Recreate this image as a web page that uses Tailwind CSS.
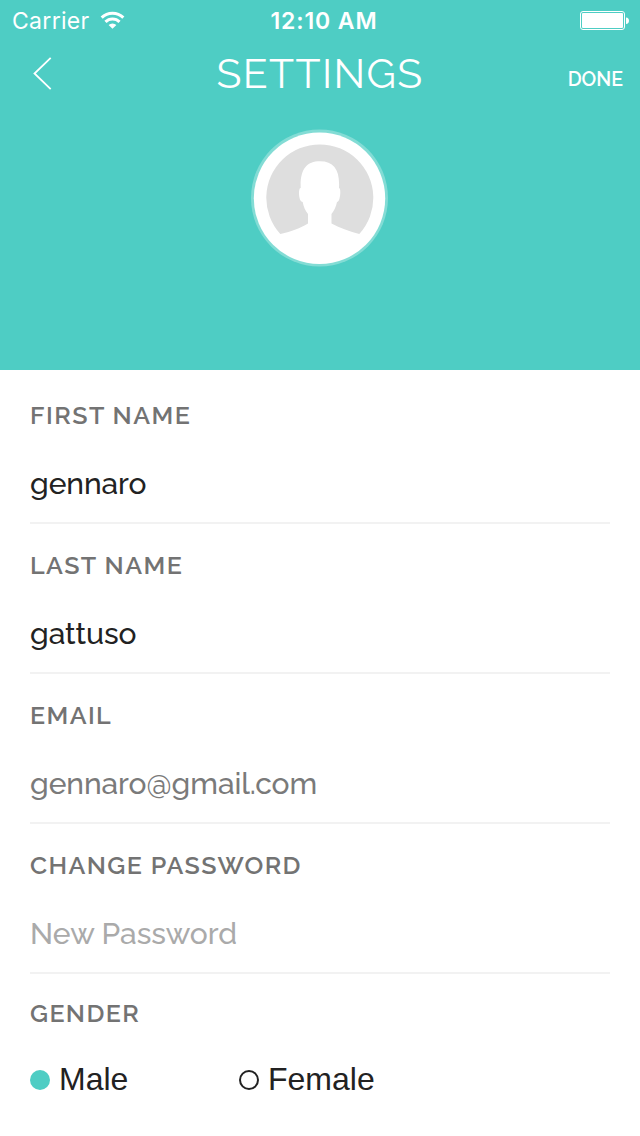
<!DOCTYPE html>
<html lang="en">
<head>
<meta charset="utf-8">
<title>Settings</title>
<script src="https://cdn.jsdelivr.net/npm/@tailwindcss/browser@4"></script>
</head>
<body class="w-[640px] h-[1136px] overflow-hidden bg-white font-['Raleway','Lato',sans-serif] text-[#222222]">
<header class="h-[370px] bg-[#4ecdc4] text-white">
  <div class="h-10 grid grid-cols-[211px_1fr_204px] items-center pl-3 pr-[11px] font-['Inter',sans-serif] text-[23px] leading-10">
    <div class="flex items-center gap-[10px]">
      <span class="mt-px tracking-[0.3px]">Carrier</span>
      <svg class="-mt-px w-[25px] h-[19px]" viewBox="0 0 26 20" fill="none" stroke="#fff" stroke-width="3.2"><path d="M1.600 7a16.200 16.200 0 0 1 22.800 0M5.600 11.500a10.500 10.500 0 0 1 14.800 0"/><path d="M8.900 14.800a5.800 5.800 0 0 1 8.200 0L13 18.800z" fill="#fff" stroke="none"/></svg>
    </div>
    <span class="mt-px text-center font-semibold tracking-[0.9px] whitespace-nowrap">12:10 AM</span>
    <svg class="justify-self-end w-[49px] h-[20px]" viewBox="0 0 49 20"><rect x=".5" y=".5" width="44" height="18" rx="2.500" fill="none" stroke="#fff"/><rect x="2" y="2" width="41" height="15" rx="1" fill="#fff"/><path d="M46 6.500c4 0 4 6.500 0 6.500z" fill="#fff"/></svg>
  </div>
  <div class="h-[72px] grid grid-cols-[120px_1fr_120px] pr-4">
    <svg class="ml-8 mt-4 w-5 h-[35px]" viewBox="0 0 20 35" fill="none" stroke="#fff" stroke-width="1.8"><path d="M18.700 1.800 2.500 17.500 18.700 33.200"/></svg>
    <h1 class="ml-[16px] mt-[10px] text-center text-[41px] leading-[48px] font-normal tracking-[1.4px] whitespace-nowrap">SETTINGS</h1>
    <span class="justify-self-end mr-px mt-[28px] text-[19.5px] leading-6 font-semibold">DONE</span>
  </div>
  <svg class="ml-[250px] mt-[16px] w-[140px] h-[140px]" viewBox="250 128 140 140">
    <circle cx="319.500" cy="198" r="68.500" fill="#83dcd5"/>
    <circle cx="319.500" cy="198.300" r="65.700" fill="#fff"/>
    <path d="M280.300 234A53.500 53.500 0 1 1 359.300 234C350 231.500 340 228 331.500 223.500V214C334 211 336 207 337 202C339 202 340.300 197 340.300 192C340.300 189 339.700 188 339 188C340 170 334 161.300 320 161.300C306 161.300 300 170 300.700 188C299.500 188 299 190 299 193C299 198 300.500 202 302.700 202C303.500 207 305.500 211 308 214V223.500C300 228 292 231.500 280.300 234Z" fill="#dedede"/>
  </svg>
</header>
<main class="pl-[30px] pr-[30px]">
  <section class="h-[154px] pt-[30px] border-b-2 border-[#f2f2f2]">
    <h2 class="text-[25px] leading-[30px] font-semibold text-[#737373] tracking-[1.45px]">FIRST NAME</h2>
    <p class="mt-[36px] text-[30px] leading-9 font-medium tracking-[-0.07px]">gennaro</p>
  </section>
  <section class="h-[150px] pt-[26px] border-b-2 border-[#f2f2f2]">
    <h2 class="text-[25px] leading-[30px] font-semibold text-[#737373] tracking-[1.45px]">LAST NAME</h2>
    <p class="mt-[36px] text-[30px] leading-9 font-medium tracking-[-0.07px]">gattuso</p>
  </section>
  <section class="h-[150px] pt-[26px] border-b-2 border-[#f2f2f2]">
    <h2 class="text-[25px] leading-[30px] font-semibold text-[#737373] tracking-[1.4px]">EMAIL</h2>
    <p class="mt-[36px] text-[30px] leading-9 font-medium tracking-[-0.07px] text-[#7a7a7a]">gennaro@gmail.com</p>
  </section>
  <section class="h-[150px] pt-[26px] border-b-2 border-[#f2f2f2]">
    <h2 class="text-[25px] leading-[30px] font-semibold text-[#737373] tracking-[1.4px]">CHANGE PASSWORD</h2>
    <p class="mt-[36px] text-[30px] leading-9 font-medium text-[#aaaaaa]">New Password</p>
  </section>
  <section class="pt-[24px]">
    <h2 class="text-[25px] leading-[30px] font-semibold text-[#737373] tracking-[1.4px]">GENDER</h2>
    <div class="mt-[33px] flex font-['Liberation_Sans',sans-serif] text-[32px] leading-9">
      <div class="w-[209px] flex items-center gap-[9px]"><span class="mt-[2px] size-5 rounded-full bg-[#4ecdc4]"></span><span>Male</span></div>
      <div class="flex items-center gap-[9px]"><span class="mt-[2px] size-5 rounded-full border-2 border-[#222222]"></span><span>Female</span></div>
    </div>
  </section>
</main>
</body>
</html>
